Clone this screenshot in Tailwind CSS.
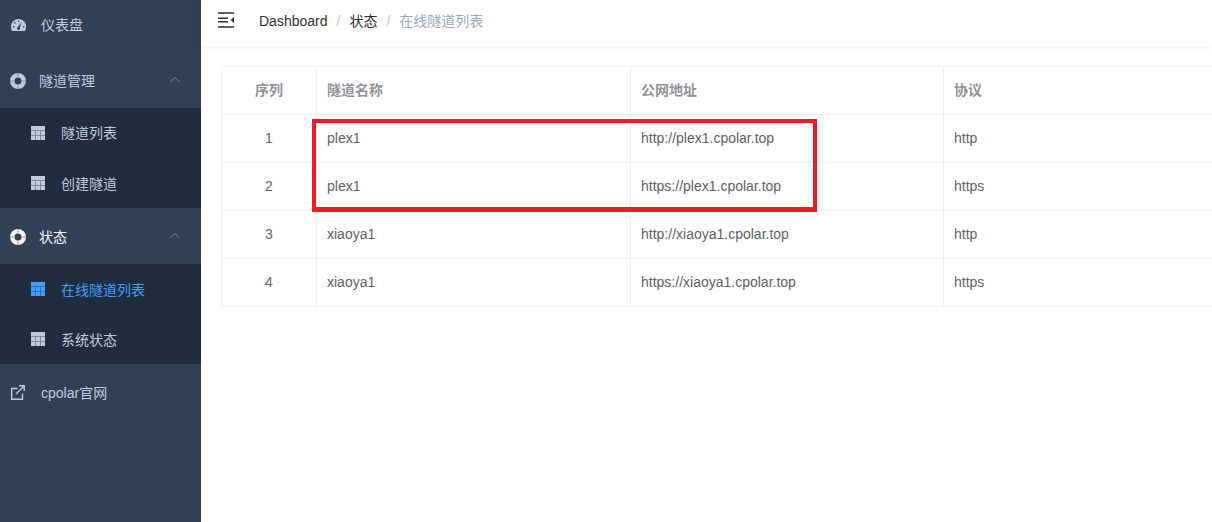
<!DOCTYPE html>
<html lang="zh">
<head>
<meta charset="utf-8">
<script src="https://cdn.jsdelivr.net/npm/@tailwindcss/browser@4"></script>
</head>
<body class="m-0 overflow-hidden bg-white">
<div class="relative flex h-[522px] w-[1212px] overflow-hidden bg-white font-['Liberation_Sans','Noto_Sans_CJK_SC',sans-serif] text-sm">
  <aside class="flex h-full w-[201px] shrink-0 flex-col bg-[#304156] text-[#bfcbd9]">
    <div class="flex h-[53px] items-center pb-[3px]">
      <svg class="ml-[11px] h-[12px] w-[15px]" viewBox="0 0 15 12"><path fill="#bfcbd9" d="M0 7.500a7.500 7.500 0 0 1 15 0c0 1.700-.4 3.300-1.100 4.500H1.100C.4 10.800 0 9.200 0 7.500z"/><g fill="#304156"><rect x="7" y="1.500" width="1.200" height="1.500"/><rect x="3.200" y="3.200" width="1.400" height="1.400"/><rect x="1.800" y="7" width="1.500" height="1.300"/><rect x="11.800" y="7" width="1.500" height="1.300"/><path d="M10.500 3 8.800 8.500a1.500 1.500 0 1 1-2-.4z"/></g></svg>
      <span class="ml-[15px]">仪表盘</span>
    </div>
    <div class="flex h-[55px] items-center">
      <svg class="ml-[10px] mt-[1px] h-[16px] w-[16px]" viewBox="0 0 16 16"><circle cx="8" cy="8" r="5.750" fill="none" stroke="#bfcbd9" stroke-width="4.500"/><path d="M8 0v3.500M8 12.500v3.500M0 8h3.500M12.500 8h3.500" stroke="#304156" stroke-width="0.500"/></svg>
      <span class="ml-[13px]">隧道管理</span>
      <svg class="ml-auto mr-[21px] mt-[-1px] h-[8px] w-[10px]" viewBox="0 0 10 8"><path d="M.5 6 5 1.500 9.500 6" fill="none" stroke="#7b8896" stroke-width="1"/></svg>
    </div>
    <div class="bg-[#1f2d3d]">
      <div class="flex h-[50px] items-center">
        <svg class="ml-[31px] h-[14px] w-[14px]" viewBox="0 0 14 14"><path fill="#bfcbd9" d="M0 0h14v14H0z"/><path stroke="#1f2d3d" d="M0 4.500h14M0 9.500h14M4.500 4.500V14M9.500 4.500V14" opacity=".4"/></svg>
        <span class="ml-[16px]">隧道列表</span>
      </div>
      <div class="flex h-[50px] items-center">
        <svg class="ml-[31px] h-[14px] w-[14px]" viewBox="0 0 14 14"><path fill="#bfcbd9" d="M0 0h14v14H0z"/><path stroke="#1f2d3d" d="M0 4.500h14M0 9.500h14M4.500 4.500V14M9.500 4.500V14" opacity=".4"/></svg>
        <span class="ml-[16px] mt-[2px]">创建隧道</span>
      </div>
    </div>
    <div class="flex h-[56px] items-center text-[#f4f4f5]">
      <svg class="ml-[10px] mt-[2px] h-[16px] w-[16px]" viewBox="0 0 16 16"><circle cx="8" cy="8" r="5.750" fill="none" stroke="#f4f4f5" stroke-width="4.500"/><path d="M8 0v3.500M8 12.500v3.500M0 8h3.500M12.500 8h3.500" stroke="#304156" stroke-width="0.500"/></svg>
      <span class="ml-[13px] mt-[2px]">状态</span>
      <svg class="ml-auto mr-[21px] mt-[-1px] h-[8px] w-[10px]" viewBox="0 0 10 8"><path d="M.5 6 5 1.500 9.500 6" fill="none" stroke="#7b8896" stroke-width="1"/></svg>
    </div>
    <div class="bg-[#1f2d3d]">
      <div class="flex h-[50px] items-center text-[#409eff]">
        <svg class="ml-[31px] h-[14px] w-[14px]" viewBox="0 0 14 14"><path fill="#409eff" d="M0 0h14v14H0z"/><path stroke="#1f2d3d" d="M0 4.500h14M0 9.500h14M4.500 4.500V14M9.500 4.500V14" opacity=".4"/></svg>
        <span class="ml-[16px] mt-[2px]">在线隧道列表</span>
      </div>
      <div class="flex h-[50px] items-center">
        <svg class="ml-[31px] h-[14px] w-[14px]" viewBox="0 0 14 14"><path fill="#bfcbd9" d="M0 0h14v14H0z"/><path stroke="#1f2d3d" d="M0 4.500h14M0 9.500h14M4.500 4.500V14M9.500 4.500V14" opacity=".4"/></svg>
        <span class="ml-[16px] mt-[2px]">系统状态</span>
      </div>
    </div>
    <div class="flex h-[56px] items-center">
      <svg class="ml-[10px] h-[15px] w-[15px]" viewBox="0 0 15 15"><path d="M7.500 3.500H1.700v10.800h10.800V8.500M6 9 14 1M9 .8h5.200V6" fill="none" stroke="#bfcbd9" stroke-width="1.400"/></svg>
      <span class="ml-[16px] mt-[2px]">cpolar官网</span>
    </div>
  </aside>
  <main class="min-w-0 flex-1">
    <header class="flex h-[46px] items-center pb-[4px] shadow-[0_1px_4px_rgba(0,21,41,0.08)]">
      <svg class="ml-[17px] mt-[-2px] h-[16px] w-[16px]" viewBox="0 0 16 16"><path d="M0 1h16M0 15h16M0 6.300h10M0 9.700h10" stroke="#303133" stroke-width="1.500"/><path d="M16 5v6l-3.500-3z" fill="#303133"/></svg>
      <nav class="ml-[25px] flex items-center">
        <span class="text-[#303133]">Dashboard</span>
        <span class="mx-[9px] text-[#c0c4cc]">/</span>
        <span class="text-[#303133]">状态</span>
        <span class="mx-[9px] text-[#c0c4cc]">/</span>
        <span class="text-[#97a8be]">在线隧道列表</span>
      </nav>
    </header>
    <div class="overflow-hidden pl-[20px] pt-[20px]">
      <table class="w-[1100px] table-fixed border-collapse text-[#606266]">
        <colgroup><col class="w-[95px]"><col class="w-[314px]"><col class="w-[313px]"><col></colgroup>
        <thead class="text-[#909399]">
          <tr class="h-[48px]">
            <th class="border border-[#ebeef5] px-[10px] pb-[2px] text-center font-bold">序列</th>
            <th class="border border-[#ebeef5] px-[10px] pb-[2px] text-left font-bold">隧道名称</th>
            <th class="border border-[#ebeef5] px-[10px] pb-[2px] text-left font-bold">公网地址</th>
            <th class="border border-[#ebeef5] px-[10px] pb-[2px] text-left font-bold">协议</th>
          </tr>
        </thead>
        <tbody>
          <tr class="h-[48px]">
            <td class="border border-[#ebeef5] px-[10px] pb-[2px] text-center">1</td>
            <td class="border border-[#ebeef5] px-[10px] pb-[2px]">plex1</td>
            <td class="border border-[#ebeef5] px-[10px] pb-[2px]">http://plex1.cpolar.top</td>
            <td class="border border-[#ebeef5] px-[10px] pb-[2px]">http</td>
          </tr>
          <tr class="h-[48px]">
            <td class="border border-[#ebeef5] px-[10px] pb-[2px] text-center">2</td>
            <td class="border border-[#ebeef5] px-[10px] pb-[2px]">plex1</td>
            <td class="border border-[#ebeef5] px-[10px] pb-[2px]">https://plex1.cpolar.top</td>
            <td class="border border-[#ebeef5] px-[10px] pb-[2px]">https</td>
          </tr>
          <tr class="h-[48px]">
            <td class="border border-[#ebeef5] px-[10px] pb-[2px] text-center">3</td>
            <td class="border border-[#ebeef5] px-[10px] pb-[2px]">xiaoya1</td>
            <td class="border border-[#ebeef5] px-[10px] pb-[2px]">http://xiaoya1.cpolar.top</td>
            <td class="border border-[#ebeef5] px-[10px] pb-[2px]">http</td>
          </tr>
          <tr class="h-[48px]">
            <td class="border border-[#ebeef5] px-[10px] pb-[2px] text-center">4</td>
            <td class="border border-[#ebeef5] px-[10px] pb-[2px]">xiaoya1</td>
            <td class="border border-[#ebeef5] px-[10px] pb-[2px]">https://xiaoya1.cpolar.top</td>
            <td class="border border-[#ebeef5] px-[10px] pb-[2px]">https</td>
          </tr>
        </tbody>
      </table>
    </div>
  </main>
  <div class="absolute left-[312px] top-[119px] h-[93px] w-[505px] border-4 border-b-[5px] border-[#ed1c24]"></div>
</div>
</body>
</html>
